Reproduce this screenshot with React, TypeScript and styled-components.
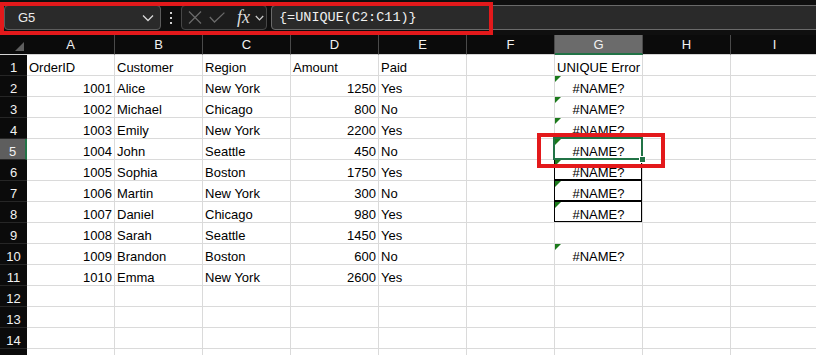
import React from "react";
import styled, { createGlobalStyle, css } from "styled-components";

/* ---- Data ---- */
type Align = "left" | "right" | "center";
type Value = string | number | null;

const COLUMNS = ["A", "B", "C", "D", "E", "F", "G", "H", "I"];

const ORDERS: [number, string, string, number, string][] = [
    [1001, "Alice",   "New York", 1250, "Yes"],
    [1002, "Michael", "Chicago",  800,  "No"],
    [1003, "Emily",   "New York", 2200, "Yes"],
    [1004, "John",    "Seattle",  450,  "No"],
    [1005, "Sophia",  "Boston",   1750, "Yes"],
    [1006, "Martin",  "New York", 300,  "No"],
    [1007, "Daniel",  "Chicago",  980,  "Yes"],
    [1008, "Sarah",   "Seattle",  1450, "Yes"],
    [1009, "Brandon", "Boston",   600,  "No"],
    [1010, "Emma",    "New York", 2600, "Yes"],
];

const G_VALUES: Record<number, string> = {
    1: "UNIQUE Error",
    2: "#NAME?", 3: "#NAME?", 4: "#NAME?", 5: "#NAME?",
    6: "#NAME?", 7: "#NAME?", 8: "#NAME?", 10: "#NAME?",
};

// row 15 only peeks in at the bottom edge, its label is below the fold
const ROW_COUNT = 15;
const LAST_LABELLED = 14;
const SELECTED = { row: 5, col: 6 };

function rowValues (row: number): Value[]
{
    const out: Value[] = Array(9).fill(null);
    if (row === 1) {
        ["OrderID", "Customer", "Region", "Amount", "Paid"].forEach((v, i) => (out[i] = v));
    } else if (row - 2 < ORDERS.length) {
        ORDERS[row - 2].forEach((v, i) => (out[i] = v));
    }
    if (G_VALUES[row]) out[6] = G_VALUES[row];
    return out;
}

function alignOf (v: Value): Align
{
    if (typeof v === "number") return "right";
    if (typeof v === "string" && v.startsWith("#")) return "center";
    return "left";
}

/* ---- Root ---- */
export default function App ()
{
    const rows = Array.from({ length: ROW_COUNT }, (_, i) => i + 1);

    return (
        <>
            <GlobalStyle/>
            <Sheet>
                <FormulaBar>
                    <NameBox>
                        <NameText>G5</NameText>
                        <Chevron width="12" height="8" viewBox="0 0 12 8">
                            <polyline points="1,1.5 6,6.5 11,1.5" fill="none" stroke="#d8d8d8" strokeWidth="1.3"/>
                        </Chevron>
                    </NameBox>
                    <Kebab><Dot/><Dot/><Dot/></Kebab>
                    <FnBox>
                        <IconX width="14" height="13" viewBox="0 0 14 13">
                            <path d="M1 0.5 L13 12.5 M13 0.5 L1 12.5" stroke="#6a6a6a" strokeWidth="1.3"/>
                        </IconX>
                        <IconCheck width="16" height="11" viewBox="0 0 16 11">
                            <polyline points="0.8,5 5.5,10 15.4,0.6" fill="none" stroke="#6a6a6a" strokeWidth="1.3"/>
                        </IconCheck>
                        <FxLabel>fx</FxLabel>
                        <Chevron width="9" height="6" viewBox="0 0 9 6">
                            <polyline points="0.8,1 4.5,4.8 8.2,1" fill="none" stroke="#cfcfcf" strokeWidth="1.2"/>
                        </Chevron>
                    </FnBox>
                    <FormulaInput>{"{=UNIQUE(C2:C11)}"}</FormulaInput>
                </FormulaBar>

                <Grid>
                    <Corner><CornerMark/></Corner>
                    {COLUMNS.map((c, i) => (
                        <ColHead key={c} $active={i === SELECTED.col}>{c}</ColHead>
                    ))}

                    {rows.map(row => (
                        <React.Fragment key={row}>
                            <RowHead $active={row === SELECTED.row}>
                                {row <= LAST_LABELLED ? row : null}
                            </RowHead>
                            {rowValues(row).map((v, col) => {
                                const isG = col === 6;
                                const selected = row === SELECTED.row && col === SELECTED.col;
                                return (
                                    <Cell
                                        key={col}
                                        $align={alignOf(v)}
                                        $boxed={isG && row >= 5 && row <= 8}
                                        $selected={selected}
                                    >
                                        {v === "#NAME?" && <ErrorFlag/>}
                                        {v}
                                        {selected && <FillHandle/>}
                                    </Cell>
                                );
                            })}
                        </React.Fragment>
                    ))}
                </Grid>

                <Callout $x={0} $y={2} $w={493} $h={33}/>
                <Callout $x={537} $y={133} $w={128} $h={35}/>
            </Sheet>
        </>
    );
}

/* ---- Styled ---- */
const GlobalStyle = createGlobalStyle`
    html, body { margin: 0; padding: 0; background: #ffffff; }
    body { font-family: "Liberation Sans", Arial, sans-serif; }
`;

const Sheet = styled.div`
    position: relative;
    width: 816px;
    height: 355px;
    overflow: hidden;
    background: #ffffff;
`;

/* ---- Formula bar ---- */
const FormulaBar = styled.div`
    display: flex;
    align-items: center;
    height: 35px;
    box-sizing: border-box;
    padding: 0 0 0 4px;
    background: #0f0f0f;
`;
const NameBox = styled.div`
    display: flex;
    align-items: center;
    justify-content: space-between;
    width: 157px;
    height: 25px;
    box-sizing: border-box;
    padding: 0 6px 0 13px;
    background: #2a2a2a;
    border: 1px solid #5c5c5c;
    border-radius: 4px;
`;
const NameText = styled.span`
    font-size: 13px;
    color: #ececec;
`;
const Chevron = styled.svg`
    display: block;
    flex: none;
`;
const IconX = styled.svg`
    display: block;
    flex: none;
    margin-right: 7px;
`;
const IconCheck = styled.svg`
    display: block;
    flex: none;
    margin-right: 12px;
`;
const Kebab = styled.div`
    display: flex;
    flex-direction: column;
    align-items: center;
    justify-content: center;
    gap: 3px;
    width: 20px;
    height: 25px;
`;
const Dot = styled.span`
    width: 2px;
    height: 2px;
    background: #d0d0d0;
`;
const FnBox = styled.div`
    display: flex;
    align-items: center;
    width: 86px;
    height: 25px;
    box-sizing: border-box;
    padding: 0 3px 0 6px;
    background: #1c1c1c;
    border: 1px solid #474747;
    border-radius: 4px;
`;
const FxLabel = styled.span`
    font-family: "Liberation Serif", "Times New Roman", serif;
    font-style: italic;
    font-size: 18px;
    line-height: 1;
    color: #dcdcdc;
    margin: -2px 5px 0 0;
`;
const FormulaInput = styled.div`
    flex: 1;
    display: flex;
    align-items: center;
    height: 25px;
    box-sizing: border-box;
    margin: 0 -10px 0 4px;
    padding: 0 7px;
    background: #2a2a2a;
    border: 1px solid #6a6a6a;
    border-radius: 4px;
    font-family: "Liberation Mono", "Courier New", monospace;
    font-size: 13.5px;
    color: #f0f0f0;
    white-space: pre;
`;

/* ---- Grid ---- */
const Grid = styled.div`
    display: grid;
    grid-template-columns: 27px repeat(9, 88px);
    grid-template-rows: 20px;
    grid-auto-rows: 21px;
    font-size: 13px;
`;
const Corner = styled.div`
    position: relative;
    background: #0b0b0b;
    border-bottom: 1px solid #d4d4d4;
    box-sizing: border-box;
`;
const CornerMark = styled.span`
    position: absolute;
    right: 3px;
    bottom: 3px;
    width: 0;
    height: 0;
    border-left: 9px solid transparent;
    border-bottom: 9px solid #5e5e5e;
`;
const ColHead = styled.div<{ $active: boolean }>`
    box-sizing: border-box;
    padding-top: 1px;
    background: #0b0b0b;
    color: #f2f2f2;
    text-align: center;
    line-height: 18px;
    border-right: 1px solid #4a4a4a;
    border-bottom: 1px solid #d4d4d4;

    ${p => p.$active && css`
        background: #6b6b6b;
        border-bottom: 2px solid #217346;
    `}
`;
const RowHead = styled.div<{ $active: boolean }>`
    box-sizing: border-box;
    padding-top: 3px;
    background: #0b0b0b;
    color: #f2f2f2;
    text-align: center;
    line-height: 20px;
    border-bottom: 1px solid #262626;

    ${p => p.$active && css`
        background: #5e5e5e;
        border-right: 2px solid #217346;
    `}
`;
const Cell = styled.div<{ $align: Align; $boxed: boolean; $selected: boolean }>`
    position: relative;
    box-sizing: border-box;
    padding: 3px 2px 0;
    line-height: 20px;
    color: #000;
    white-space: nowrap;
    text-align: ${p => p.$align};
    border-right: 1px solid #dadada;
    border-bottom: 1px solid #dadada;

    ${p => p.$boxed && css`
        &::before {
            content: "";
            position: absolute;
            top: -1px;
            left: -1px;
            right: 0;
            bottom: 0;
            border: 1px solid #000;
            pointer-events: none;
        }
    `}
    ${p => p.$selected && css`
        &::after {
            content: "";
            position: absolute;
            top: -2px;
            left: -2px;
            right: -1px;
            bottom: -1px;
            border: 2px solid #217346;
            pointer-events: none;
            z-index: 2;
        }
    `}
`;
const ErrorFlag = styled.span`
    position: absolute;
    top: 0;
    left: 0;
    width: 0;
    height: 0;
    border-top: 6px solid #1b7a1b;
    border-right: 6px solid transparent;
    z-index: 1;
`;
const FillHandle = styled.span`
    position: absolute;
    right: -4px;
    bottom: -4px;
    width: 5px;
    height: 5px;
    background: #217346;
    border: 1px solid #ffffff;
    z-index: 3;
`;

/* ---- Annotations ---- */
const Callout = styled.div<{ $x: number; $y: number; $w: number; $h: number }>`
    position: absolute;
    left: ${p => p.$x}px;
    top: ${p => p.$y}px;
    width: ${p => p.$w}px;
    height: ${p => p.$h}px;
    box-sizing: border-box;
    border: 4px solid #e3191b;
    pointer-events: none;
    z-index: 5;
`;
